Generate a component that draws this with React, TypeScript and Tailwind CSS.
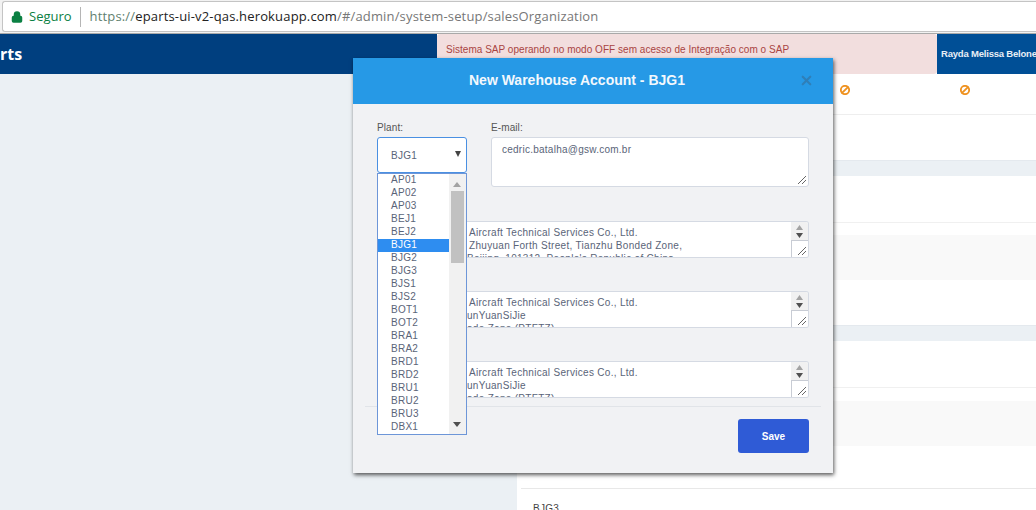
import { Ban, Lock, X } from "lucide-react";

const plants = [
  "AP01", "AP02", "AP03", "BEJ1", "BEJ2", "BJG1", "BJG2", "BJG3", "BJS1", "BJS2",
  "BOT1", "BOT2", "BRA1", "BRA2", "BRD1", "BRD2", "BRU1", "BRU2", "BRU3", "DBX1",
];

const addresses = [
  ["Aircraft Technical Services Co., Ltd.", "Zhuyuan Forth Street, Tianzhu Bonded Zone,", "Beijing, 101312, People's Republic of China"],
  ["Aircraft Technical Services Co., Ltd.", "unYuanSiJie", "ade Zone (PTFTZ)"],
  ["Aircraft Technical Services Co., Ltd.", "unYuanSiJie", "ade Zone (PTFTZ)"],
];

const Triangle = ({ up, className }: { up?: boolean; className: string }) => (
  <svg width="9" height="5" viewBox="0 0 9 5" preserveAspectRatio="none" className={className}>
    <path d={up ? "M4.5 0L9 5H0z" : "M0 0h9L4.5 5z"} fill="currentColor" />
  </svg>
);

const AddressBox = ({ lines }: { lines: string[] }) => (
  <div className="flex h-[37px] overflow-hidden rounded-[3px] border-y border-r border-[#d5dae3] bg-white">
    <div className="flex-1 overflow-hidden whitespace-nowrap pl-[68px] pt-[4px] text-[10px] leading-[13px] tracking-[0.3px] text-[#5a6478]">
      {lines.map((line) => (
        <div key={line} className={line.startsWith("Aircraft") || line.startsWith("Zhuyuan") ? "" : "-ml-[2px]"}>
          {line}
        </div>
      ))}
    </div>
    <div className="flex w-[17px] flex-col bg-[#f1f1f1]">
      <div className="flex h-[18px] flex-col items-center gap-[3px] pt-[3px]">
        <Triangle up className="w-[7px] text-[#a3a3a3]" />
        <Triangle className="w-[7px] text-[#505050]" />
      </div>
      <div className="relative flex-1 border-l border-t border-[#c8ccd4] bg-white">
        <svg width="10" height="10" viewBox="0 0 10 10" className="absolute bottom-[1px] right-[1px] text-[#666]">
          <path d="M1 9L9 1M5 9l4-4" stroke="currentColor" strokeWidth="1" fill="none" />
        </svg>
      </div>
    </div>
  </div>
);

export default function App() {
  return (
    <div className="relative flex h-[510px] w-[1036px] flex-col overflow-hidden bg-white font-['Liberation_Sans',sans-serif]">
      <div className="h-[34px] shrink-0 border-b border-[#a9a9a9] bg-[#f2f2f2] pl-[2px] pt-[1px]">
        <div className="flex h-[31px] items-center rounded-l-[3px] border border-r-0 border-[#c4c4c4] bg-white pl-[8px] font-['Open_Sans',sans-serif] text-[13px]">
          <Lock size={12} strokeWidth={3} fill="currentColor" className="text-[#0b8043]" />
          <span className="ml-[6px] text-[#0b8043]">Seguro</span>
          <span className="ml-[8px] h-[20px] w-px bg-[#b5b5b5]" />
          <span className="ml-[9px] tracking-[0.16px] text-[#5f7f6f]">https://</span>
          <span className="tracking-[0.16px] text-[#222]">eparts-ui-v2-qas.herokuapp.com</span>
          <span className="tracking-[0.16px] text-[#777]">/#/admin/system-setup/salesOrganization</span>
        </div>
      </div>

      <div className="flex h-[40px] shrink-0">
        <div className="flex-1 bg-[#003f7f] pt-[9px] font-['Open_Sans',sans-serif] text-[16px] font-bold leading-[22px] text-white">
          rts
        </div>
        <div className="w-[500px] rounded-[3px] bg-[#f2dede] pl-[9px] pt-[9px] text-[10px] leading-[13px] tracking-[0.03px] text-[#a94442]">
          Sistema SAP operando no modo OFF sem acesso de Integração com o SAP
        </div>
        <div className="w-[99px] whitespace-nowrap bg-[#004f96] pl-[4px] pt-[13px] text-[9.5px] font-bold leading-[13px] tracking-[-0.2px] text-[#e8eef5]">
          Rayda Melissa Belone
        </div>
      </div>

      <div className="flex min-h-0 flex-1 overflow-hidden">
        <div className="w-[517px] bg-[#ebf0f4]" />
        <div className="flex flex-1 flex-col">
          <div className="flex h-[41px] shrink-0 items-start border-b border-[#eeeeee] pt-[11px]">
            <Ban size={10} strokeWidth={4.5} className="ml-[323px] -scale-x-100 text-[#ef9220]" />
            <Ban size={10} strokeWidth={4.5} className="ml-[110px] -scale-x-100 text-[#ef9220]" />
          </div>
          <div className="h-[45px] shrink-0" />
          <div className="h-[16px] shrink-0 border-t border-[#e4e9ee] bg-[#ebf0f4]" />
          <div className="h-[47px] shrink-0 border-b border-[#f0f0f0]" />
          <div className="mt-[12px] h-[45px] shrink-0 bg-[#f9f9f9]" />
          <div className="h-[45px] shrink-0" />
          <div className="h-[16px] shrink-0 border-t border-[#e4e9ee] bg-[#ebf0f4]" />
          <div className="h-[47px] shrink-0 border-b border-[#f0f0f0]" />
          <div className="mt-[13px] h-[45px] shrink-0 bg-[#f9f9f9]" />
          <div className="ml-[4px] h-[43px] shrink-0 border-b border-[#e8e8e8]" />
          <div className="shrink-0 pl-[16px] pt-[13px] text-[10px] leading-[13px] tracking-[0.3px] text-[#444]">BJG3</div>
        </div>
      </div>

      {/* modal */}
      <div className="absolute left-[353px] top-[58px] w-[480px] bg-[#f1f2f4] shadow-[1px_2px_4px_rgba(0,0,0,0.65)]">
        <div className="relative flex h-[46px] items-center justify-center bg-[#2699e6] pb-[2px] pr-[32px] text-[14px] font-bold text-[#f2f8fd]">
          New Warehouse Account - BJG1
          <X size={15} strokeWidth={3.5} className="absolute right-[19px] top-[15px] text-[#2f7fb8]" />
        </div>

        <div className="px-[24px] pt-[17px]">
          <div className="flex gap-[24px]">
            <div className="w-[90px]">
              <div className="text-[10px] leading-[13px] tracking-[0.1px] text-[#555]">Plant:</div>
              <div className="mt-[3px] flex h-[36px] items-center justify-between rounded-[3px] border border-[#4a90e2] bg-white pl-[13px] pr-[5px] text-[10px] tracking-[0.27px] text-[#5a6478]">
                BJG1
                <Triangle className="mb-[2px] h-[6px] w-[6px] text-[#444]" />
              </div>
            </div>
            <div className="w-[318px]">
              <div className="text-[10px] leading-[13px] tracking-[0.1px] text-[#555]">E-mail:</div>
              <div className="relative mt-[3px] h-[50px] rounded-[3px] border border-[#d5dae3] bg-white pl-[10px] pt-[5px] text-[10px] leading-[13px] tracking-[0.25px] text-[#5a6478]">
                cedric.batalha@gsw.com.br
                <svg width="10" height="10" viewBox="0 0 10 10" className="absolute bottom-[1px] right-[1px] text-[#666]">
                  <path d="M1 9L9 1M5 9l4-4" stroke="currentColor" strokeWidth="1" fill="none" />
                </svg>
              </div>
            </div>
          </div>

          <div className="ml-[24px] mt-[34px] flex flex-col gap-[33px]">
            {addresses.map((lines, i) => (
              <AddressBox key={i} lines={lines} />
            ))}
          </div>
        </div>

        <div className="mx-[12px] mt-[8px] flex justify-end border-t border-[#e1e4e8] pb-[20px] pr-[12px] pt-[12px]">
          <button className="h-[34px] w-[71px] rounded-[3px] bg-[#2f5bd6] text-[10px] font-bold text-white">Save</button>
        </div>

        {/* open select list */}
        <div className="absolute left-[24px] top-[115px] flex h-[262px] w-[90px] border border-[#6d96d8] bg-white">
          <div className="flex-1 text-[10px] leading-[12px] tracking-[0.27px] text-[#5a6478]">
            {plants.map((plant) => (
              <div key={plant} className={plant === "BJG1" ? "h-[13px] bg-[#2e8df0] pl-[13px] text-white" : "h-[13px] pl-[13px]"}>
                {plant}
              </div>
            ))}
          </div>
          <div className="relative w-[17px] bg-[#f1f1f1]">
            <Triangle up className="absolute left-[4px] top-[8px] w-[8px] text-[#a3a3a3]" />
            <div className="absolute left-[2px] top-[17px] h-[72px] w-[13px] bg-[#c1c1c1]" />
            <Triangle className="absolute bottom-[7px] left-[4px] w-[8px] text-[#505050]" />
          </div>
        </div>
      </div>
    </div>
  );
}
